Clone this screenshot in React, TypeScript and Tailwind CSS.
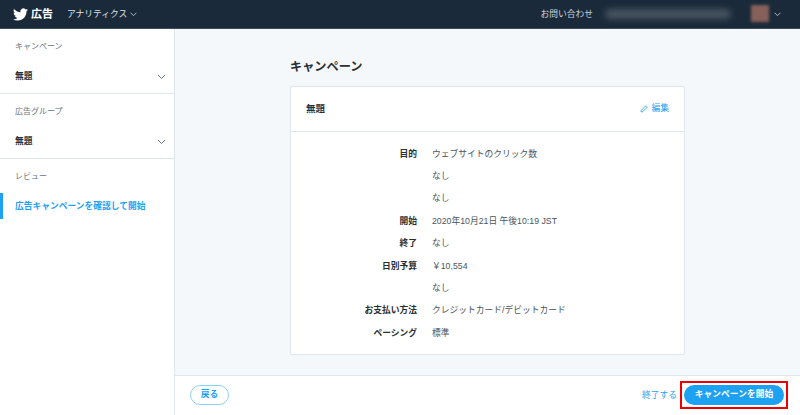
import React from "react";

const font = { fontFamily: '"Liberation Sans", "Noto Sans CJK JP", sans-serif' };

function Chevron({ className }: { className: string }) {
  return (
    <svg viewBox="0 0 12 8" className={className} fill="none" stroke="currentColor" strokeWidth="1.3" strokeLinecap="round" strokeLinejoin="round">
      <path d="M1.5 1.5 6 6l4.5-4.5" />
    </svg>
  );
}

function Section({ label, value }: { label: string; value: string }) {
  return (
    <div className="h-[65px] border-b border-[#dfe6ec] pl-[15px] pr-[8px] pt-[12px]">
      <div className="h-[12px] text-[8px] leading-[12px] text-[#66757f]">{label}</div>
      <div className="mt-[15px] flex h-[18px] items-center justify-between">
        <span className="text-[8.75px] font-bold text-[#292f33]">{value}</span>
        <Chevron className="h-[6px] w-[9px] text-[#66757f]" />
      </div>
    </div>
  );
}

const rows: [string, string][] = [
  ["目的", "ウェブサイトのクリック数"],
  ["", "なし"],
  ["", "なし"],
  ["開始", "2020年10月21日 午後10:19 JST"],
  ["終了", "なし"],
  ["日別予算", "￥10,554"],
  ["", "なし"],
  ["お支払い方法", "クレジットカード/デビットカード"],
  ["ペーシング", "標準"],
];

export default function App() {
  return (
    <div className="flex h-[415px] w-[800px] flex-col overflow-hidden bg-white" style={font}>
      <header className="flex h-[29px] shrink-0 items-center border-b border-[#3d4c5c] bg-[#1b2a3a] pl-[13px] pr-[19px]">
        <svg viewBox="0 0 24 24" className="h-[15px] w-[15px] fill-white">
          <path d="M23.95 4.57a10 10 0 0 1-2.82.77 4.96 4.96 0 0 0 2.16-2.72c-.95.55-2 .95-3.12 1.18a4.92 4.92 0 0 0-8.38 4.48C7.69 8.1 4.07 6.13 1.64 3.16a4.82 4.82 0 0 0-.66 2.47c0 1.71.87 3.21 2.19 4.1a4.9 4.9 0 0 1-2.23-.62v.06a4.92 4.92 0 0 0 3.95 4.83 5 5 0 0 1-2.21.08 4.94 4.94 0 0 0 4.6 3.42A9.87 9.87 0 0 1 0 19.54a14 14 0 0 0 7.56 2.21c9.05 0 14-7.5 14-13.98 0-.21 0-.42-.02-.63a9.94 9.94 0 0 0 2.41-2.56z" />
        </svg>
        <span className="ml-[3px] text-[11px] font-bold text-white">広告</span>
        <span className="ml-[14px] pt-[2px] text-[8.75px] text-[#dfe3e7]">アナリティクス</span>
        <Chevron className="ml-[3px] h-[5px] w-[7px] text-[#dfe3e7]" />
        <span className="ml-auto pt-[2px] text-[8.75px] text-[#ccd3d9]">お問い合わせ</span>
        <div className="ml-[12px] h-[10px] w-[126px] rounded-full bg-[#47545f] blur-[3px]" />
        <div className="mb-[2px] ml-[20px] h-[17px] w-[18px] bg-[#86605a] blur-[1.5px]" />
        <Chevron className="ml-[5px] h-[5px] w-[7px] text-[#dfe3e7]" />
      </header>
      <div className="flex min-h-0 flex-1">
        <aside className="w-[175px] shrink-0 border-r border-[#dfe6ec] bg-white">
          <Section label="キャンペーン" value="無題" />
          <Section label="広告グループ" value="無題" />
          <div className="pt-[12px]">
            <div className="h-[12px] px-[15px] text-[8px] leading-[12px] text-[#66757f]">レビュー</div>
            <div className="mt-[10px] flex h-[26px] items-center border-l-[3px] border-[#1da1f2] pl-[12px] pt-[1px] text-[8.75px] font-bold text-[#1da1f2]">
              広告キャンペーンを確認して開始
            </div>
          </div>
        </aside>
        <div className="flex min-w-0 flex-1 flex-col">
          <main className="flex-1 bg-[#f5f8fa] pl-[115px] pr-[115px] pt-[28px]">
            <h1 className="h-[20px] text-[12.2px] font-bold leading-[20px] text-[#292f33]">キャンペーン</h1>
            <section className="mt-[9px] h-[269px] rounded-[2px] border border-[#dfe6ec] bg-white">
              <div className="flex h-[45px] items-center justify-between border-b border-[#e1e8ed] pl-[15px] pr-[15px]">
                <span className="text-[9.5px] font-bold text-[#292f33]">無題</span>
                <span className="flex items-center gap-[4px] text-[8.75px] text-[#1da1f2]">
                  <svg viewBox="0 0 12 12" className="h-[8px] w-[8px]" fill="none" stroke="currentColor" strokeWidth="1.2" strokeLinejoin="round">
                    <path d="M1.5 10.5 2 7.8 8 1.8a1.2 1.2 0 0 1 1.7 0l.5.5a1.2 1.2 0 0 1 0 1.7l-6 6z" />
                  </svg>
                  編集
                </span>
              </div>
              <div className="flex flex-col pt-[11px]">
                {rows.map(([k, v], i) => (
                  <div key={i} className="flex h-[22.4px] items-center text-[8.75px]">
                    <span className="w-[126px] text-right font-bold text-[#292f33]">{k}</span>
                    <span className="ml-[15px] text-[#4a5560]">{v}</span>
                  </div>
                ))}
              </div>
            </section>
          </main>
          <footer className="flex h-[40px] shrink-0 items-center border-t border-[#dfe6ec] bg-white pb-[2px] pl-[15px] pr-[12px]">
            <button className="h-[20px] w-[39px] rounded-full border border-[#8ed0f9] pt-[1px] text-[8.75px] font-bold text-[#1da1f2]">戻る</button>
            <span className="ml-auto pt-[2px] text-[8.75px] text-[#1da1f2]">終了する</span>
            <div className="ml-[3px] border-[2px] border-[#ee0000] p-[2px]">
              <button className="block h-[20px] w-[100px] rounded-full bg-[#1da1f2] pt-[1px] text-[8.75px] font-bold text-white">キャンペーンを開始</button>
            </div>
          </footer>
        </div>
      </div>
    </div>
  );
}
